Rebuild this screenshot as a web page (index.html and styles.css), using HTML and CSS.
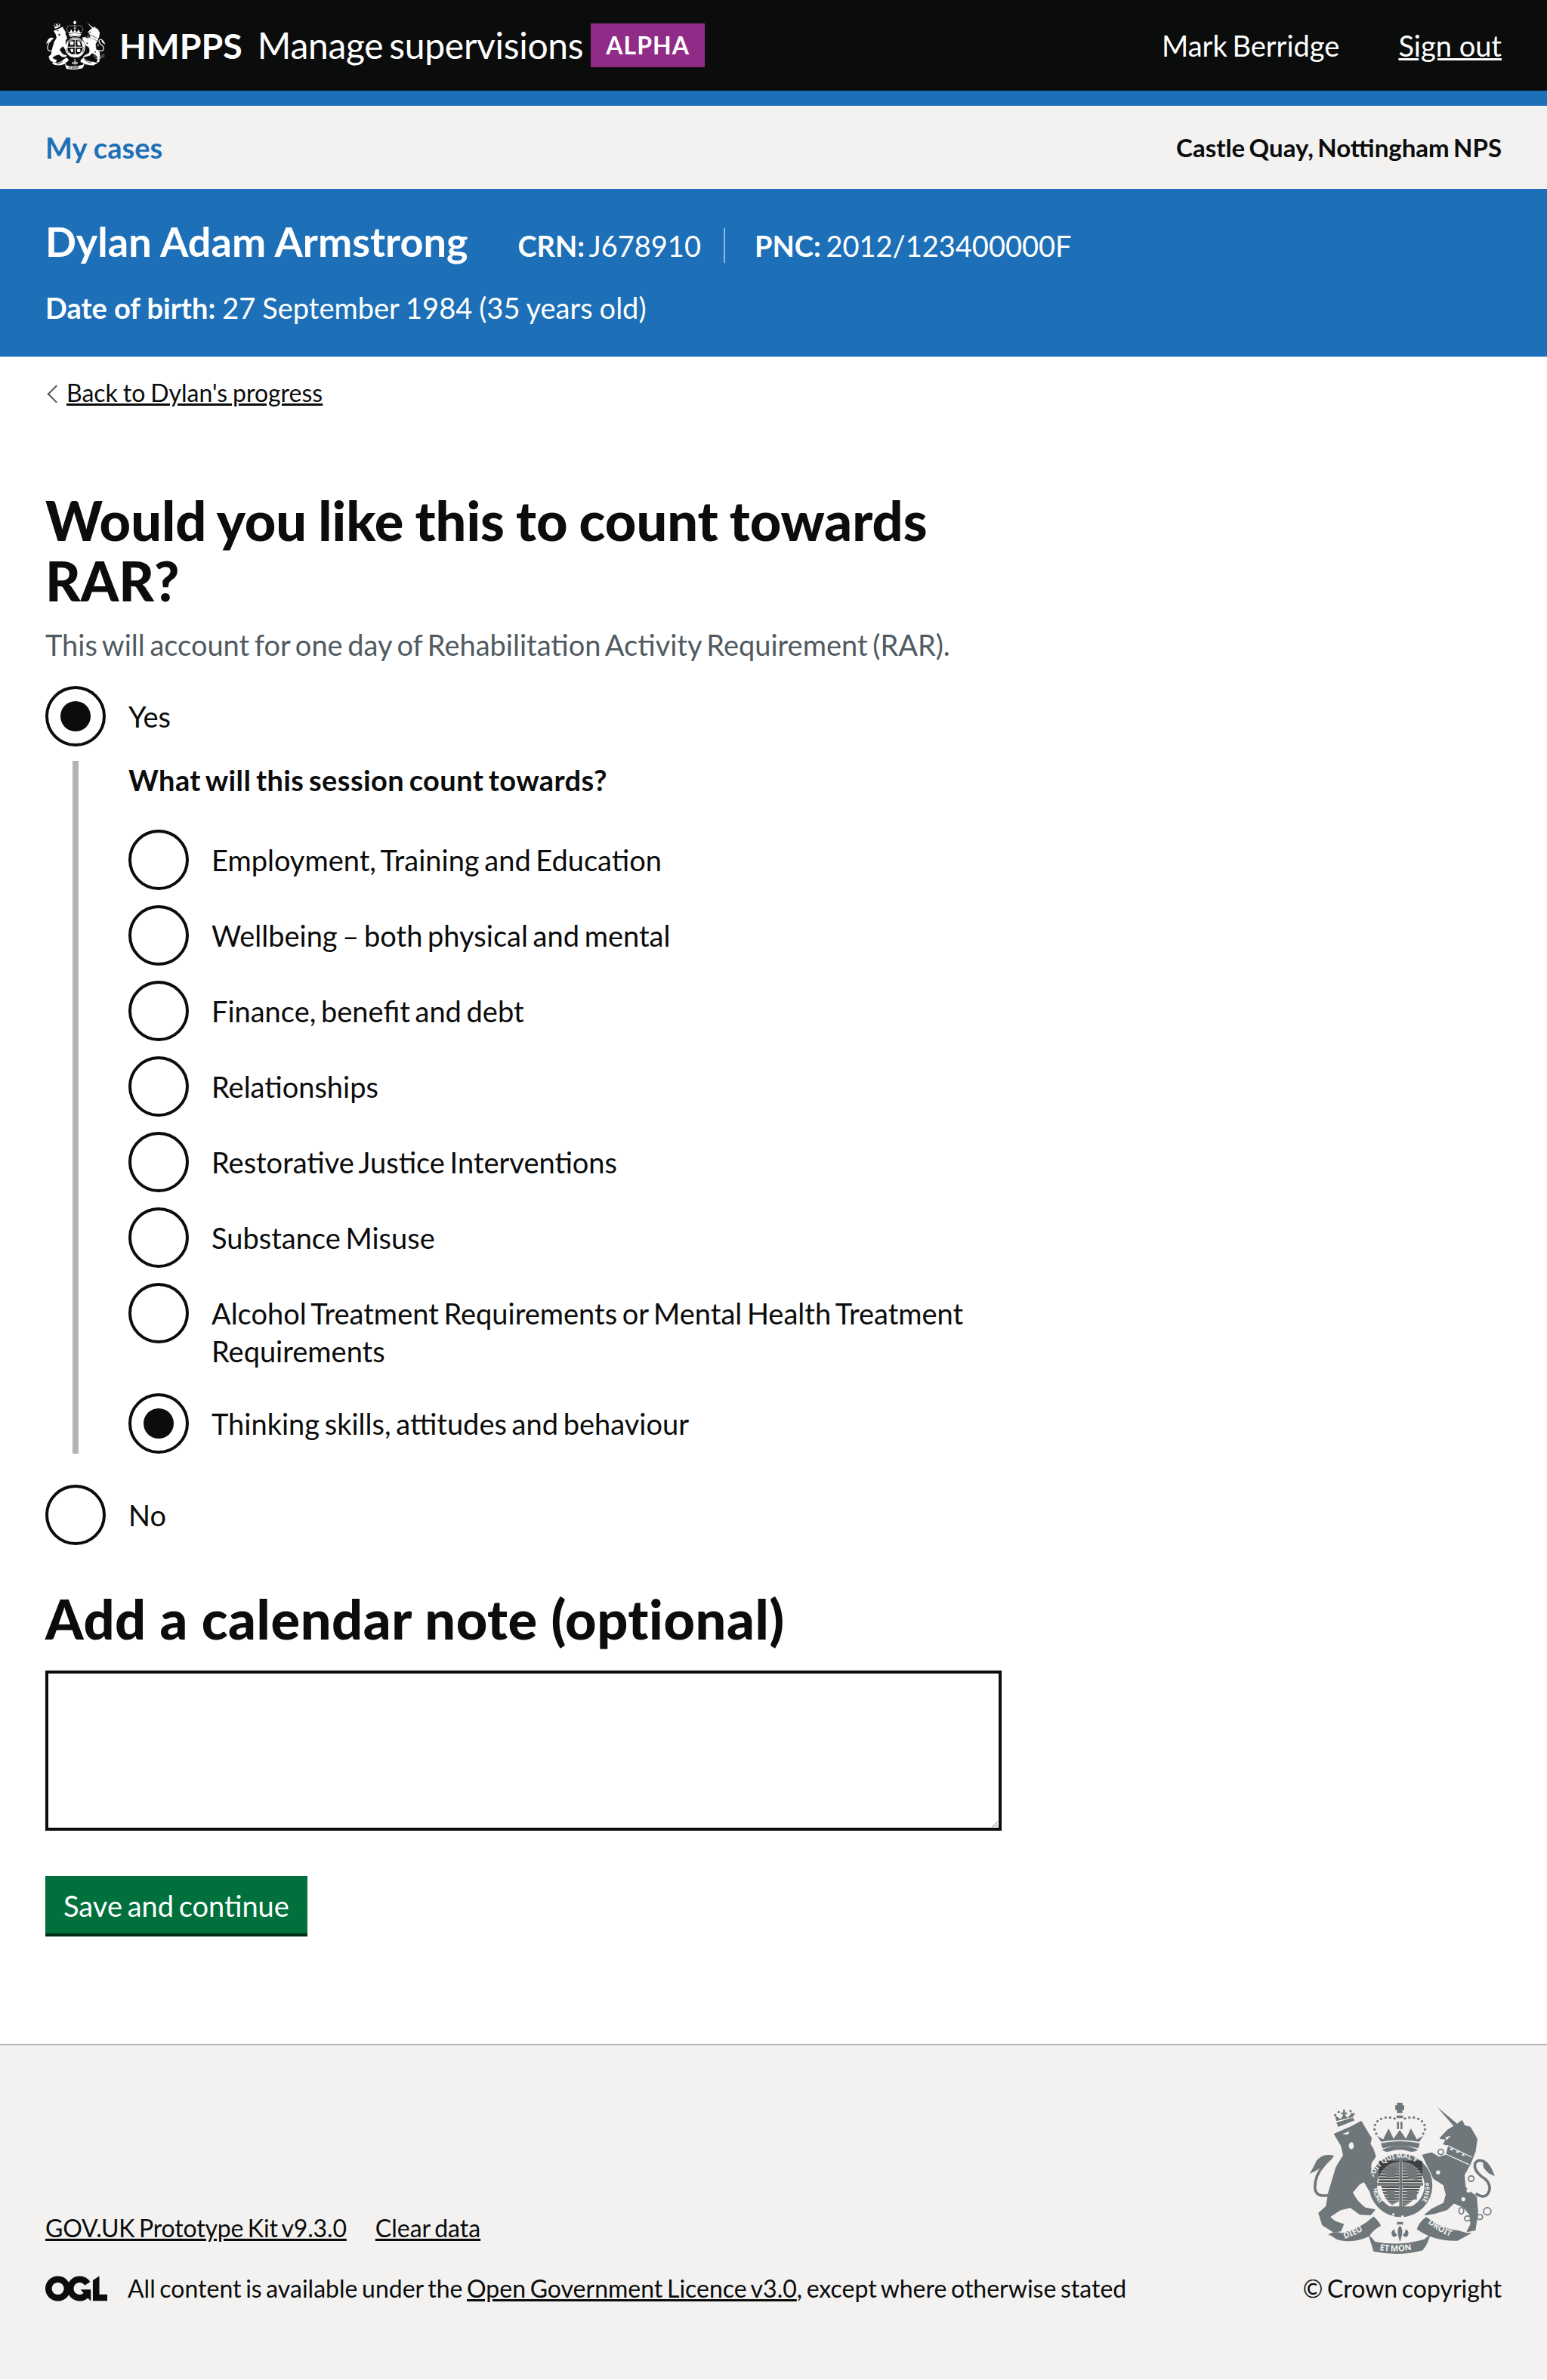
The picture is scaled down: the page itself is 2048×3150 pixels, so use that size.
FILE: index.html
```html
<!DOCTYPE html>
<html lang="en">
<head>
<meta charset="utf-8">
<title>Would you like this to count towards RAR?</title>
<link rel="stylesheet" href="styles.css">
</head>
<body>
<svg class="defs" width="0" height="0" aria-hidden="true">
  <defs>
    <pattern id="hatch" width="6" height="6" patternUnits="userSpaceOnUse"><rect width="6" height="3" fill="currentColor"/></pattern>
    <path id="arc-garter" d="M352 392A115 115 0 0 1 575 385"/>
    <path id="arc-garter-low" d="M352 420A115 115 0 0 0 412 512"/>
    <path id="arc-garter-r" d="M558 398A95 95 0 0 1 525 505"/>
    <path id="arc-dieu" d="M235 628Q300 610 345 570"/>
    <path id="arc-etmon" d="M372 672Q460 690 552 662"/>
    <path id="arc-droit" d="M572 562Q630 612 700 630"/>
    <symbol id="crest" viewBox="90 75 760 620">
      <g fill="currentColor">
        <!-- lion -->
        <path class="crest-soft" d="M198 205L262 178L305 155L322 185L345 222L340 245L352 265L362 295L345 320Q338 345 352 375L368 412L342 436L318 395L298 405L268 440Q285 480 322 505L358 512L342 530L300 528L262 500L220 510L175 540L200 560L232 570L222 595L195 600L150 572L135 525L165 498L175 440L205 340L235 290L225 250Z"/>
        <path d="M172 452Q120 462 118 420Q118 370 155 330Q185 295 190 300" fill="none" stroke="currentColor" stroke-width="11"/>
        <path d="M195 292Q150 280 125 312Q112 340 97 365Q135 350 160 325Q180 310 195 292Z"/>
        <path d="M228 205L258 193L252 207ZM265 238a10 14 0 1 0 .1 0Z" fill="var(--crest-bg)"/>
        <path d="M205 158L272 138L278 150L212 176Z"/>
        <path d="M204 152L200 130L222 144L236 122L250 140L268 118L274 135Z"/>
        <g><circle cx="200" cy="128" r="5"/><circle cx="214" cy="116" r="5"/><circle cx="262" cy="112" r="5"/><circle cx="274" cy="124" r="5"/><path d="M224 118h8v-12h8v12h8v7h-8v14h-8v-14h-8z"/></g>
        <!-- unicorn -->
        <path d="M612 95L693 163L681 175Z"/>
        <path class="crest-soft" d="M625 222L655 190L695 165L712 152L722 172L745 178L772 225L765 275L745 325L720 370L725 420L770 460L775 520L765 592L735 597L750 570L745 530L720 500L680 482L650 510L600 525L565 530L590 510L640 485L650 450L640 410L625 400L600 385L580 345L555 290L590 282L620 300L650 290L660 250L640 245L650 225Z"/>
        <path d="M768 445Q815 475 825 425Q825 395 790 375Q760 350 765 325Q775 305 800 315" fill="none" stroke="currentColor" stroke-width="11"/>
        <path d="M795 308Q825 315 845 375Q815 365 800 340Z"/>
        <path d="M652 250L752 298M645 285L742 328" fill="none" stroke="var(--crest-bg)" stroke-width="4"/>
        <path d="M662 268l10-8 4 12zM686 278l10-8 4 12zM710 290l10-8 4 12z" fill="var(--crest-bg)"/>
        <path d="M645 218L668 212L650 230Z" fill="var(--crest-bg)"/>
        <circle cx="740" cy="432" r="9" fill="var(--crest-bg)"/><circle cx="718" cy="468" r="8" fill="var(--crest-bg)"/>
        <g fill="var(--crest-bg)" stroke="currentColor" stroke-width="5">
          <circle cx="627" cy="277" r="11"/><circle cx="750" cy="385" r="11"/><circle cx="616" cy="360" r="11"/>
          <ellipse cx="710" cy="515" rx="10" ry="13"/><ellipse cx="735" cy="546" rx="12" ry="10"/><ellipse cx="785" cy="540" rx="11" ry="10"/><circle cx="815" cy="517" r="15"/>
        </g>
        <!-- crown -->
        <path d="M450 78h22v10h7v20h-7v12h-22v-12h-7v-20h7z"/>
        <path d="M448 130h26v10h-26zM450 155h8v30h-8zM464 155h8v30h-8z"/>
        <g>
          <circle cx="440" cy="142" r="5"/><circle cx="422" cy="138" r="5"/><circle cx="404" cy="138" r="5"/><circle cx="386" cy="143" r="5"/><circle cx="371" cy="153" r="5"/><circle cx="361" cy="168" r="5"/><circle cx="359" cy="186" r="5"/><circle cx="366" cy="203" r="5"/>
          <circle cx="482" cy="142" r="5"/><circle cx="500" cy="138" r="5"/><circle cx="518" cy="138" r="5"/><circle cx="536" cy="143" r="5"/><circle cx="551" cy="153" r="5"/><circle cx="561" cy="168" r="5"/><circle cx="563" cy="186" r="5"/><circle cx="556" cy="203" r="5"/>
        </g>
        <path d="M368 212L386 236Q460 222 540 236L556 212L530 226L506 182L486 224L461 188L436 224L416 182L394 226Z"/>
        <path d="M384 242Q460 226 542 242L536 262Q460 244 392 262Z"/>
        <path d="M390 268Q460 238 535 268Q520 280 500 275Q460 262 420 275Q400 280 390 268Z"/>
        <!-- garter -->
        <circle cx="465" cy="412" r="131" fill="var(--crest-bg)"/>
        <circle cx="465" cy="412" r="112" fill="none" stroke="currentColor" stroke-width="32"/>
        <path d="M392 515Q465 558 540 515L520 497H410Z"/>
        <path d="M376 312H458V400H376Z" fill="url(#hatch)"/>
        <path d="M472 312H552V400H472Z" fill="url(#hatch)"/>
        <path d="M386 414H458V476L430 492Q396 470 386 414Z" fill="url(#hatch)"/>
        <path d="M472 414H545Q535 470 472 500Z" fill="url(#hatch)"/>
        <path d="M400 345Q430 325 450 345L440 380H405ZM490 325L525 345L535 390L495 385ZM490 430H530V470H490ZM405 430H440V470H415Z"/>
        <path d="M459 305H471V515H459ZM370 401H555V413H370Z"/>
        <g class="crest-motto" fill="var(--crest-bg)">
          <text font-size="28"><textPath href="#arc-garter" startOffset="3%">SOIT QUI MAL Y</textPath></text>
          <text font-size="24"><textPath href="#arc-garter-low" startOffset="4%">HONI</textPath></text>
          <text font-size="24"><textPath href="#arc-garter-r" startOffset="5%">PENSE</textPath></text>
        </g>
        <circle cx="435" cy="530" r="5" fill="var(--crest-bg)"/><circle cx="472" cy="538" r="5" fill="var(--crest-bg)"/>
        <!-- lion paw over the garter -->
        <path class="crest-soft" d="M312 328L362 394L368 412L342 436L318 395Z"/>
        <!-- fleur -->
        <path d="M450 560h24v12l-12-3-12 3zM462 575Q480 590 462 640Q444 590 462 575ZM440 590Q420 598 432 618Q442 626 452 612Q440 608 440 590ZM484 590Q504 598 492 618Q482 626 472 612Q484 608 484 590Z"/>
        <!-- ribbon -->
        <path d="M172 610Q200 595 225 605Q300 590 355 538Q375 555 385 575Q355 590 338 618Q270 650 205 630Q190 618 172 610Z"/>
        <path d="M334 610Q350 625 362 640Q460 660 560 630L585 610Q575 650 553 675Q460 700 355 680Q345 645 334 610Z"/>
        <path d="M530 590Q540 558 568 540Q635 590 700 595Q725 605 752 605Q725 620 695 636Q600 640 530 590Z"/>
        <g class="crest-motto" fill="var(--crest-bg)">
          <text font-size="34"><textPath href="#arc-dieu" startOffset="2%">DIEU</textPath></text>
          <text font-size="34"><textPath href="#arc-etmon" startOffset="4%">ET MON</textPath></text>
          <text font-size="34"><textPath href="#arc-droit" startOffset="2%">DROIT</textPath></text>
        </g>
      </g>
    </symbol>
  </defs>
</svg>

<header class="site-header">
  <div class="brand">
    <svg class="brand-crest" aria-hidden="true"><use href="#crest"/></svg>
    <span class="brand-org">HMPPS</span>
    <span class="brand-service">Manage supervisions</span>
    <span class="phase-tag">ALPHA</span>
  </div>
  <nav class="account">
    <span>Mark Berridge</span>
    <a class="link-inherit" href="#">Sign out</a>
  </nav>
</header>

<div class="subnav">
  <a class="subnav-link" href="#">My cases</a>
  <span class="subnav-office">Castle Quay, Nottingham NPS</span>
</div>

<section class="offender">
  <div class="offender-row">
    <h2 class="offender-name">Dylan Adam Armstrong</h2>
    <span class="offender-id offender-crn"><b>CRN:</b> J678910</span>
    <span class="offender-id"><b>PNC:</b> 2012/123400000F</span>
  </div>
  <p class="offender-dob"><b>Date of birth:</b> 27 September 1984 (35 years old)</p>
</section>

<main class="main">
  <a class="back-link" href="#">Back to Dylan's progress</a>
  <h1 class="heading-large heading-question">Would you like this to count towards RAR?</h1>
  <p class="hint">This will account for one day of Rehabilitation Activity Requirement (RAR).</p>

  <div class="radios">
    <div class="radio is-checked"><span class="radio-mark"></span><span class="radio-label">Yes</span></div>
    <div class="conditional">
      <p class="legend">What will this session count towards?</p>
      <div class="radio"><span class="radio-mark"></span><span class="radio-label">Employment, Training and Education</span></div>
      <div class="radio"><span class="radio-mark"></span><span class="radio-label">Wellbeing – both physical and mental</span></div>
      <div class="radio"><span class="radio-mark"></span><span class="radio-label">Finance, benefit and debt</span></div>
      <div class="radio"><span class="radio-mark"></span><span class="radio-label">Relationships</span></div>
      <div class="radio"><span class="radio-mark"></span><span class="radio-label">Restorative Justice Interventions</span></div>
      <div class="radio"><span class="radio-mark"></span><span class="radio-label">Substance Misuse</span></div>
      <div class="radio"><span class="radio-mark"></span><span class="radio-label">Alcohol Treatment Requirements or Mental Health Treatment Requirements</span></div>
      <div class="radio is-checked"><span class="radio-mark"></span><span class="radio-label">Thinking skills, attitudes and behaviour</span></div>
    </div>
    <div class="radio"><span class="radio-mark"></span><span class="radio-label">No</span></div>
  </div>

  <h2 class="heading-large heading-note">Add a calendar note (optional)</h2>
  <textarea class="note" aria-label="Add a calendar note (optional)"></textarea>
  <button class="button" type="button">Save and continue</button>
</main>

<footer class="footer">
  <div class="footer-meta">
    <ul class="footer-links">
      <li><a class="link-inherit kit-link" href="#">GOV.UK Prototype Kit v9.3.0</a></li>
      <li><a class="link-inherit" href="#">Clear data</a></li>
    </ul>
    <div class="licence">
      <svg class="ogl" viewBox="0 0 483.2 195.7" aria-hidden="true"><path fill="currentColor" d="M421.5 142.8V.1l-50.7 32.3v161.1h112.4v-50.7zm-122.3-9.6A47.12 47.12 0 0 1 221 97.8c0-26 21.1-47.1 47.1-47.1 16.7 0 31.4 8.7 39.7 21.8l42.7-27.2A97.63 97.63 0 0 0 268.1 0c-36.5 0-68.3 20.1-85.1 49.7A98 98 0 0 0 97.8 0C43.9 0 0 43.9 0 97.8s43.9 97.8 97.8 97.8c36.5 0 68.3-20.1 85.1-49.7a97.76 97.76 0 0 0 149.6 25.4l19.4 22.2h3v-87.8h-80l24.3 27.5zM97.8 145c-26 0-47.1-21.1-47.1-47.1s21.1-47.1 47.1-47.1 47.2 21 47.2 47S123.8 145 97.8 145"/></svg>
      <span>All content is available under the <a class="link-inherit" href="#">Open Government Licence v3.0</a>, except where otherwise stated</span>
    </div>
  </div>
  <div class="footer-crown">
    <svg class="footer-crest" aria-hidden="true"><use href="#crest"/></svg>
    <span>© Crown copyright</span>
  </div>
</footer>
</body>
</html>
```
FILE: styles.css
```css
* { box-sizing: border-box; }
html, body { margin: 0; padding: 0; }
body {
  font-family: Lato, "Noto Sans", sans-serif;
  font-size: 38px;
  line-height: 50px;
  color: #0b0c0c;
  background: #fff;
}
body * { word-spacing: -0.08em; }
.defs { position: absolute; }
h1, h2, p, ul { margin: 0; padding: 0; }
.link-inherit { color: inherit; text-decoration: underline; }
.crest-motto { font-family: "Noto Sans", sans-serif; font-weight: 700; word-spacing: 0; }
.crest-soft { stroke: currentColor; stroke-width: 6px; stroke-linejoin: round; }

.site-header {
  --crest-bg: #0b0c0c;
  height: 140px;
  padding: 0 60px;
  display: flex;
  justify-content: space-between;
  align-items: center;
  background: #0b0c0c;
  border-bottom: 20px solid #1d70b8;
  color: #fff;
}
.brand { display: flex; align-items: center; }
.brand-crest { width: 80px; height: 66px; margin-right: 18px; }
.brand-org { font-size: 46.5px; font-weight: 700; margin-right: 20px; }
.brand-service { font-size: 48px; word-spacing: -4px; letter-spacing: -0.3px; }
.phase-tag {
  margin-left: 10px;
  padding: 0 20px;
  height: 58px;
  line-height: 58px;
  background: #912b88;
  font-size: 32px;
  font-weight: 700;
  letter-spacing: 1px;
}
.account { display: flex; gap: 78px; font-size: 38px; }
.account a { word-spacing: 0; }

.subnav {
  height: 110px;
  padding: 0 60px;
  display: flex;
  justify-content: space-between;
  align-items: center;
  background: #f3f2f1;
}
.subnav-link { color: #1d70b8; font-weight: 700; font-size: 38px; text-decoration: none; word-spacing: 0; }
.subnav-office { font-weight: 700; font-size: 33px; }

.offender {
  height: 222px;
  padding: 42px 60px 0;
  background: #1d70b8;
  color: #fff;
}
.offender-row { display: flex; align-items: baseline; height: 60px; }
.offender-name { font-size: 54px; line-height: 56px; font-weight: 700; margin-right: 66px; word-spacing: 0; }
.offender-id { font-size: 38px; line-height: 46px; }
.offender-crn { padding-right: 30px; margin-right: 39px; border-right: 2px solid #8eb8dc; }
.offender-dob { margin-top: 30px; font-size: 38px; word-spacing: -0.75px; }
.offender-dob b { word-spacing: 0; }

.main { padding: 28px 60px 0; }
.back-link {
  display: block;
  position: relative;
  padding-left: 28px;
  font-size: 32px;
  line-height: 40px;
  color: #0b0c0c;
  text-decoration: underline;
  word-spacing: -0.04em;
}
.back-link::before {
  content: "";
  position: absolute;
  left: 6px;
  top: 13px;
  width: 15px;
  height: 15px;
  border-left: 2px solid #505a5f;
  border-bottom: 2px solid #505a5f;
  transform: rotate(45deg);
}
.heading-large { font-size: 72px; line-height: 80px; font-weight: 900; width: 1266px; }
.heading-question { margin-top: 108px; word-spacing: -2px; }
.hint { margin-top: 20px; margin-bottom: 30px; color: #505a5f; }
.radios { width: 1266px; }
.radio { display: flex; gap: 30px; min-height: 80px; margin-bottom: 20px; }
.radio-mark {
  flex: none;
  position: relative;
  width: 80px;
  height: 80px;
  border: 4px solid #0b0c0c;
  border-radius: 50%;
  background: #fff;
}
.is-checked > .radio-mark::after {
  content: "";
  position: absolute;
  left: 16px;
  top: 16px;
  width: 40px;
  height: 40px;
  border-radius: 50%;
  background: #0b0c0c;
}
.radio-label { padding: 15px 0 11px; }
.conditional {
  margin-left: 36px;
  margin-bottom: 41px;
  padding-left: 66px;
  border-left: 8px solid #b1b4b6;
}
.conditional .radio:last-child { margin-bottom: 0; }
.legend { font-weight: 700; letter-spacing: 0.4px; margin-bottom: 40px; margin-top: -1px; padding-bottom: 1px; }
.heading-note { margin-top: 57px; letter-spacing: 0.6px; word-spacing: 0; }
.note {
  display: block;
  width: 1266px;
  height: 212px;
  margin-top: 29px;
  border: 4px solid #0b0c0c;
  border-radius: 0;
  background: #fff;
}
.button {
  display: block;
  height: 80px;
  margin-top: 60px;
  padding: 2px 24px 0;
  border: 0;
  border-bottom: 4px solid #002d18;
  background: #00703c;
  color: #fff;
  font: inherit;
}

.footer {
  --crest-bg: #f3f2f1;
  margin-top: 142px;
  height: 444px;
  padding: 0 60px 100px;
  display: flex;
  justify-content: space-between;
  align-items: flex-end;
  background: #f3f2f1;
  border-top: 2px solid #b1b4b6;
  font-size: 32px;
  line-height: 40px;
}
.footer-links { display: flex; gap: 38px; list-style: none; }
.kit-link { letter-spacing: -0.15px; }
.licence { display: flex; align-items: center; gap: 27px; margin-top: 40px; }
.ogl { width: 82px; height: 34px; }
.footer-crown { display: flex; flex-direction: column; align-items: center; gap: 24px; }
.footer-crest { width: 250px; height: 203px; color: #6f777b; }
```
